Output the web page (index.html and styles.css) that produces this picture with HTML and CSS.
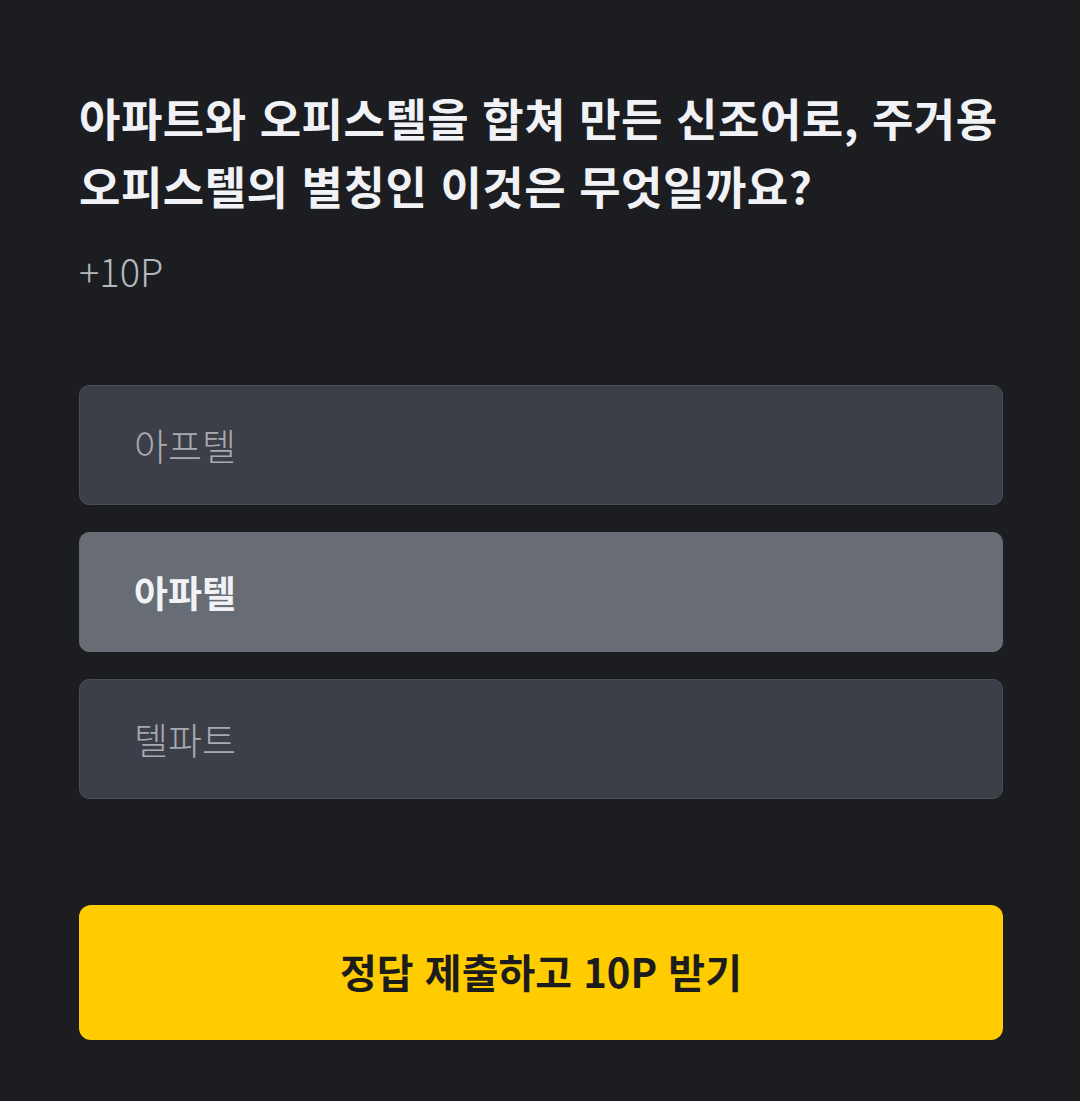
FILE: index.html
```html
<!DOCTYPE html>
<html lang="ko">
<head>
    <meta charset="UTF-8">
    <meta name="viewport" content="width=device-width, initial-scale=1.0">
    <title>퀴즈</title>
    <link rel="stylesheet" href="styles.css">
</head>
<body>
    <div class="quiz">
        <h1 class="question">아파트와 오피스텔을 합쳐 만든 신조어로, 주거용 오피스텔의 별칭인 이것은 무엇일까요?</h1>
        <p class="reward">+10P</p>

        <div class="options">
            <div class="option">아프텔</div>
            <div class="option selected">아파텔</div>
            <div class="option">텔파트</div>
        </div>

        <button class="submit">정답 제출하고 10P 받기</button>
    </div>
</body>
</html>
```

FILE: styles.css
```css
/* General Styles */
body {
    margin: 0;
    background-color: #1c1d21;
    font-family: "Noto Sans CJK KR", "Noto Sans", sans-serif;
    color: #f1f2f5;
    height: 1101px;
}

.quiz {
    padding: 84px 77px 0 79px;
    display: flex;
    flex-direction: column;
}

.question {
    margin: 0;
    font-size: 45px;
    font-weight: 700;
    line-height: 68px;
    letter-spacing: 0.5px;
}

.reward {
    margin: 26px 0 0 0;
    font-size: 38px;
    font-weight: 300;
    color: #b4b7bd;
    line-height: 50px;
}

.options {
    display: flex;
    flex-direction: column;
    gap: 27px;
    margin-top: 89px;
}

.option {
    height: 120px;
    box-sizing: border-box;
    display: flex;
    align-items: center;
    padding-left: 54px;
    background-color: #3c3f47;
    border: 1px solid #4a4d55;
    border-radius: 10px;
    font-size: 37px;
    font-weight: 300;
    color: #a7aab0;
}

.option.selected {
    background-color: #686c75;
    border-color: #686c75;
    font-weight: 700;
    color: #f1f2f5;
}

.submit {
    margin-top: 106px;
    height: 135px;
    border: none;
    border-radius: 12px;
    background-color: #ffcc00;
    color: #1c1c1c;
    font-family: inherit;
    font-size: 40px;
    font-weight: 700;
    padding-bottom: 4px;
    cursor: pointer;
}
```
